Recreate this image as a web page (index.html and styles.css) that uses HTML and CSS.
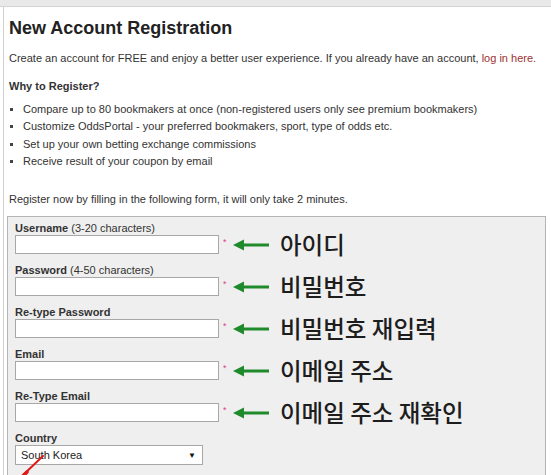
FILE: index.html
```html
<!DOCTYPE html>
<html>
<head>
<meta charset="utf-8">
<link rel="stylesheet" href="styles.css">
</head>
<body>
<div class="topbar"></div>
<div class="page">
  <h1 class="title">New Account Registration</h1>
  <p class="intro">Create an account for FREE and enjoy a better user experience. If you already have an account, <a class="link" href="#">log in here.</a></p>
  <h3 class="why">Why to Register?</h3>
  <ul class="benefits">
    <li>Compare up to 80 bookmakers at once (non-registered users only see premium bookmakers)</li>
    <li>Customize OddsPortal - your preferred bookmakers, sport, type of odds etc.</li>
    <li>Set up your own betting exchange commissions</li>
    <li>Receive result of your coupon by email</li>
  </ul>
  <p class="note">Register now by filling in the following form, it will only take 2 minutes.</p>
  <div class="form">
    <div class="group">
      <div class="label"><b>Username</b> (3-20 characters)</div>
      <div class="row">
        <div class="input"></div><span class="req">*</span>
        <svg class="arrow" width="36" height="12" viewBox="0 0 36 12"><path d="M36 6H8" stroke="#1f8a2c" stroke-width="3"/><path d="M0 6L11 0.5V11.5Z" fill="#1f8a2c"/></svg>
        <span class="ko">아이디</span>
      </div>
    </div>
    <div class="group">
      <div class="label"><b>Password</b> (4-50 characters)</div>
      <div class="row">
        <div class="input"></div><span class="req">*</span>
        <svg class="arrow" width="36" height="12" viewBox="0 0 36 12"><path d="M36 6H8" stroke="#1f8a2c" stroke-width="3"/><path d="M0 6L11 0.5V11.5Z" fill="#1f8a2c"/></svg>
        <span class="ko">비밀번호</span>
      </div>
    </div>
    <div class="group">
      <div class="label"><b>Re-type Password</b></div>
      <div class="row">
        <div class="input"></div><span class="req">*</span>
        <svg class="arrow" width="36" height="12" viewBox="0 0 36 12"><path d="M36 6H8" stroke="#1f8a2c" stroke-width="3"/><path d="M0 6L11 0.5V11.5Z" fill="#1f8a2c"/></svg>
        <span class="ko">비밀번호 재입력</span>
      </div>
    </div>
    <div class="group">
      <div class="label"><b>Email</b></div>
      <div class="row">
        <div class="input"></div><span class="req">*</span>
        <svg class="arrow" width="36" height="12" viewBox="0 0 36 12"><path d="M36 6H8" stroke="#1f8a2c" stroke-width="3"/><path d="M0 6L11 0.5V11.5Z" fill="#1f8a2c"/></svg>
        <span class="ko">이메일 주소</span>
      </div>
    </div>
    <div class="group">
      <div class="label"><b>Re-Type Email</b></div>
      <div class="row">
        <div class="input"></div><span class="req">*</span>
        <svg class="arrow" width="36" height="12" viewBox="0 0 36 12"><path d="M36 6H8" stroke="#1f8a2c" stroke-width="3"/><path d="M0 6L11 0.5V11.5Z" fill="#1f8a2c"/></svg>
        <span class="ko">이메일 주소 재확인</span>
      </div>
    </div>
    <div class="group">
      <div class="label"><b>Country</b></div>
      <div class="select"><span>South Korea</span><span class="caret">▼</span></div>
      <svg class="redline" width="32" height="30" viewBox="0 0 32 30"><path d="M28 1L7 21" stroke="#e01818" stroke-width="2" stroke-linecap="round"/><path d="M12 17L2 27" stroke="#e01818" stroke-width="3.5" stroke-linecap="round"/></svg>
    </div>
  </div>
</div>
</body>
</html>
```
FILE: styles.css
```css
html, body {
  margin: 0;
  padding: 0;
  background: #fff;
  overflow: hidden;
}
body {
  font-family: "Liberation Sans", Arial, sans-serif;
  font-size: 11px;
  color: #333;
}
.topbar {
  height: 6px;
  background: #e9e9e9;
  border-bottom: 1px solid #d4d4d4;
}
.page {
  margin-left: 3px;
  border-left: 1px solid #d0d0d0;
  padding-left: 3px;
  height: 500px;
}
.title {
  margin: 0;
  padding: 8px 0 0 2px;
  font-size: 18px;
  line-height: 26px;
  font-weight: bold;
  color: #222;
}
.intro {
  margin: 10px 0 0 2px;
  line-height: 14px;
}
.link {
  color: #9b3232;
  text-decoration: none;
}
.why {
  margin: 14px 0 0 2px;
  font-size: 11px;
  line-height: 14px;
  font-weight: bold;
}
.benefits {
  list-style: none;
  margin: 8px 0 0 3px;
  padding: 0;
}
.benefits li {
  display: flex;
  align-items: center;
  gap: 10px;
  line-height: 17.3px;
}
.benefits li::before {
  content: "";
  width: 3px;
  height: 3px;
  background: #444;
}
.note {
  margin: 22px 0 0 2px;
  line-height: 14px;
}
.form {
  margin-top: 10px;
  width: 539px;
  background: #efefef;
  border: 1px solid #b4b4b4;
  padding: 5px 0 0 7px;
  box-sizing: border-box;
  height: 300px;
}
.group {
  position: relative;
  height: 42px;
}
.label {
  line-height: 13px;
  font-size: 11px;
}
.label b {
  color: #333;
}
.row {
  display: flex;
  align-items: center;
  height: 19px;
}
.input {
  width: 204px;
  height: 19px;
  box-sizing: border-box;
  background: #fff;
  border: 1px solid #a8a8a8;
}
.req {
  color: #d8457a;
  font-size: 9px;
  margin: -6px 0 0 4px;
  width: 9px;
}
.arrow {
  margin-left: 1px;
}
.ko {
  font-family: "Noto Sans CJK KR", sans-serif;
  font-size: 23.5px;
  font-weight: 500;
  line-height: 19px;
  color: #1d1d1d;
  margin-left: 11px;
  white-space: nowrap;
}
.select {
  width: 188px;
  height: 20px;
  box-sizing: border-box;
  background: #fff;
  border: 1px solid #a8a8a8;
  display: flex;
  align-items: center;
  justify-content: space-between;
  padding: 0 6px 0 5px;
  font-size: 11px;
  color: #222;
}
.caret {
  font-size: 8px;
  color: #111;
}
.redline {
  position: absolute;
  left: 0;
  top: 23px;
}
```
